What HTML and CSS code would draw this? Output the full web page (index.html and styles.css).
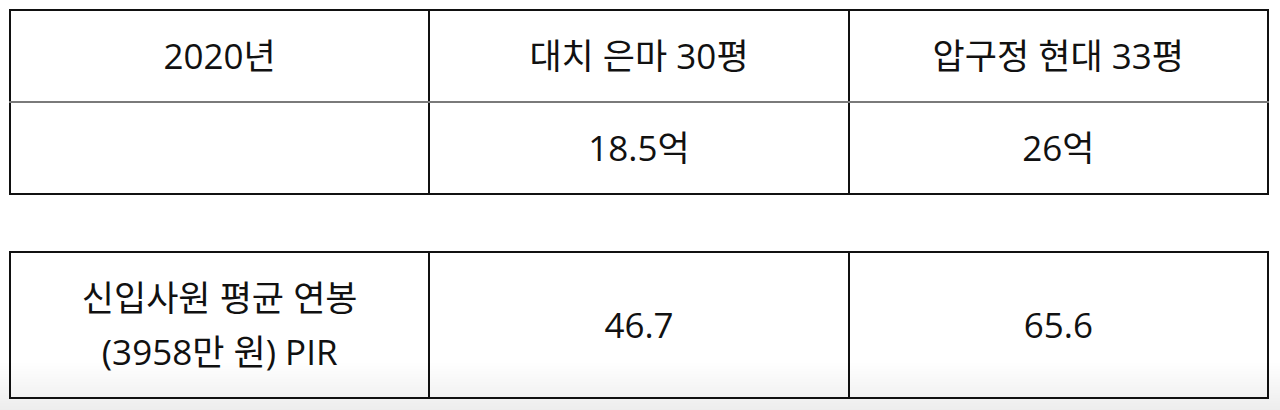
FILE: index.html
```html
<!DOCTYPE html>
<html lang="ko">
<head>
<meta charset="utf-8">
<link rel="stylesheet" href="styles.css">
</head>
<body>
<div class="page">
  <table class="grid">
    <tr class="head">
      <td>2020년</td>
      <td>대치 은마 30평</td>
      <td>압구정 현대 33평</td>
    </tr>
    <tr>
      <td></td>
      <td>18.5억</td>
      <td>26억</td>
    </tr>
  </table>
  <table class="grid">
    <tr>
      <td>신입사원 평균 연봉<br>(3958만 원) PIR</td>
      <td>46.7</td>
      <td>65.6</td>
    </tr>
  </table>
</div>
<div class="fade"></div>
</body>
</html>
```

FILE: styles.css
```css
html, body {
  margin: 0;
  padding: 0;
  background: #fff;
}
body {
  font-family: "Open Sans", "Noto Sans CJK KR", sans-serif;
  color: #111;
  width: 1280px;
  height: 410px;
  overflow: hidden;
}
.page {
  padding: 9px 11px 0 9px;
  display: flex;
  flex-direction: column;
  gap: 56px;
}
.grid {
  width: 1260px;
  table-layout: fixed;
  border-collapse: collapse;
  border: 2px solid #111;
}
.grid td {
  width: 33.333%;
  border-left: 2px solid #111;
  text-align: center;
  vertical-align: middle;
  font-size: 35px;
  line-height: 54px;
  padding: 18px 10px;
  height: 54px;
}
.grid td:first-child {
  border-left: none;
}
.grid tr.head td {
  border-bottom: 2px solid #7a7a7a;
}
.fade {
  position: fixed;
  left: 0;
  right: 0;
  bottom: 0;
  height: 48px;
  background: linear-gradient(to bottom, rgba(0,0,0,0), rgba(0,0,0,0.07));
  pointer-events: none;
}
```
